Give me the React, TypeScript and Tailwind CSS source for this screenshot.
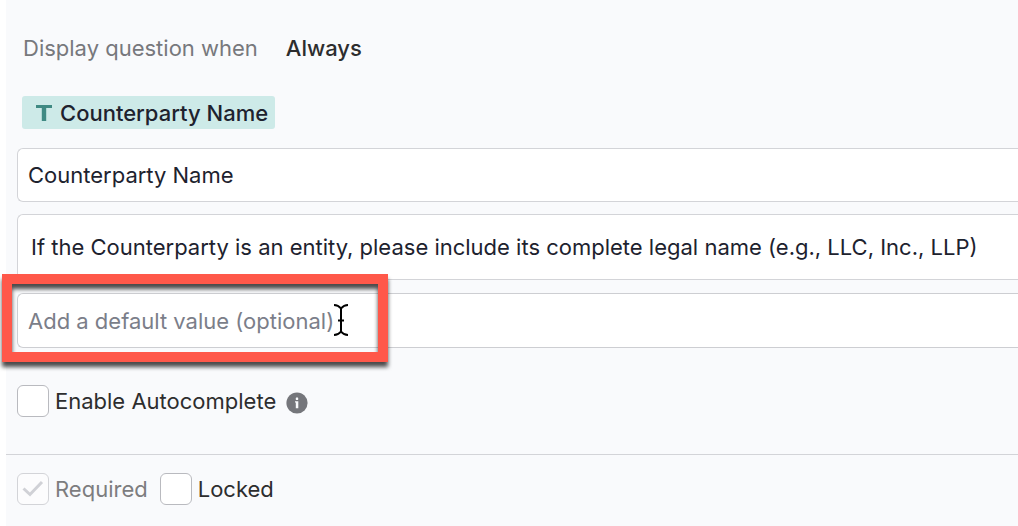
import React from "react";

function TextTypeIcon() {
  return (
    <svg width="16" height="16" viewBox="0 0 16 16" aria-hidden="true">
      <path d="M0 0H16V3H10.2V16H5.8V3H0Z" fill="#3f8a83" />
    </svg>
  );
}

function InfoIcon() {
  return (
    <svg width="22" height="22" viewBox="0 0 22 22" aria-hidden="true">
      <circle cx="11" cy="11" r="10.6" fill="#75767b" />
      <rect x="9.8" y="5.6" width="2.4" height="2.4" rx="0.4" fill="#f9fafc" />
      <path d="M9 9.2H12.3V16.2H9.8V10.6H9Z" fill="#f9fafc" />
    </svg>
  );
}

function TextCursor() {
  return (
    <svg
      className="pointer-events-none absolute left-[316px] top-[10px]"
      width="16"
      height="34"
      viewBox="0 0 16 34"
      fill="none"
      stroke="#000"
      strokeWidth="2"
      aria-hidden="true"
    >
      <path d="M1 2C4.500 2 6 3 8 5.500C10 3 11.500 2 15 2M8 5V29M1 32C4.500 32 6 31 8 28.500C10 31 11.500 32 15 32M5 17.500H11" />
    </svg>
  );
}

type CheckProps = { id: string; label: string; checked?: boolean; disabled?: boolean };

function Check({ id, label, checked, disabled }: CheckProps) {
  return (
    <div className="flex items-center gap-[6px]">
      <span className="relative flex size-8">
        <input
          id={id}
          type="checkbox"
          defaultChecked={checked}
          disabled={disabled}
          className="peer size-8 appearance-none rounded-[6px] border border-[#b9babf] bg-white disabled:border-[#d3d4d8] disabled:bg-[#fcfcfd]"
        />
        <svg
          className="pointer-events-none absolute inset-0 hidden peer-checked:block"
          width="32"
          height="32"
          viewBox="0 0 32 32"
          fill="none"
          stroke="#d0d1d6"
          strokeWidth="3"
          aria-hidden="true"
        >
          <path d="M6.500 15.500L13 21.500L25 9" />
        </svg>
      </span>
      <label htmlFor={id} className={disabled ? "text-[#7d7d7f]" : "text-[#2d2d2e]"}>
        {label}
      </label>
    </div>
  );
}

export default function App() {
  return (
    <div className="min-h-screen overflow-hidden bg-white pl-[6px] font-['Inter',sans-serif] text-[22px] leading-7">
      <main className="min-h-screen bg-[#f9fafc]">
        <section className="flex flex-col border-b border-[#d3d4d8] pb-[37px] pl-[11px] pt-[34px]">
          <div className="flex gap-7 pl-[6px]">
            <span className="text-[#77787c]">Display question when</span>
            <span className="font-medium text-[#2d2d2e]">Always</span>
          </div>

          <div className="mt-[34px] flex pl-[5px]">
            <span className="flex h-[33px] items-center gap-2 rounded-[3px] bg-[#cdeae8] pl-[14px] pr-[7px] font-medium text-[#1d222e]">
              <TextTypeIcon />
              Counterparty Name
            </span>
          </div>

          <div className="mt-[19px] flex flex-col">
            <input
              aria-label="Question name"
              defaultValue="Counterparty Name"
              className="h-[54px] w-full rounded-l-[6px] border border-r-0 border-[#d3d4d8] bg-white px-[10px] text-[#1d222e] outline-none"
            />
            <textarea
              aria-label="Question description"
              rows={1}
              defaultValue="If the Counterparty is an entity, please include its complete legal name (e.g., LLC, Inc., LLP)"
              className="mt-3 block h-[66px] w-full resize-none overflow-hidden rounded-l-[6px] border border-r-0 border-[#d3d4d8] bg-white px-[13px] py-[18px] text-[#1d222e] outline-none"
            />
            <div className="relative mt-[13px]">
              <input
                aria-label="Default value"
                placeholder="Add a default value (optional)"
                className="block h-[55px] w-full rounded-l-[6px] border border-r-0 border-[#cdced2] bg-white px-[10px] outline-none placeholder:text-[#7b7e89]"
              />
              <div className="pointer-events-none absolute -left-[15px] -top-[19px] h-[88px] w-[386px] border-[10px] border-[#ff584a] drop-shadow-[0_5px_2px_rgba(0,0,0,0.7)]" />
              <TextCursor />
            </div>
          </div>

          <div className="mt-[37px] flex items-center gap-[10px]">
            <Check id="autocomplete" label="Enable Autocomplete" />
            <button type="button" aria-label="About autocomplete" className="mt-1">
              <InfoIcon />
            </button>
          </div>
        </section>

        <section className="flex gap-3 pb-5 pl-[11px] pt-[18px]">
          <Check id="required" label="Required" checked disabled />
          <Check id="locked" label="Locked" />
        </section>
      </main>
    </div>
  );
}
